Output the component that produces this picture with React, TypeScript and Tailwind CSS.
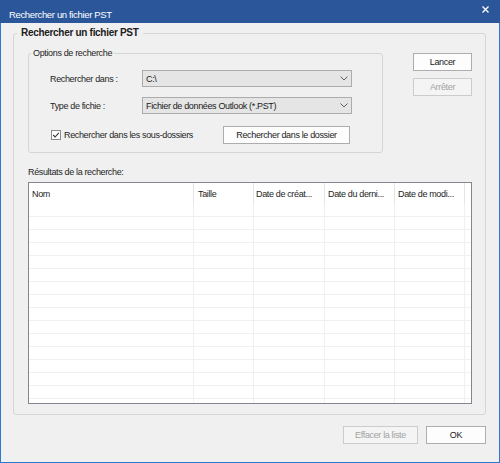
import React from 'react';

const columns = [
  { label: 'Nom', cls: 'w-[165px] pl-[3px]' },
  { label: 'Taille', cls: 'w-[60px] pl-[4px]' },
  { label: 'Date de créat...', cls: 'w-[71px] pl-[2px]' },
  { label: 'Date du derni...', cls: 'w-[70px] pl-[3px]' },
  { label: 'Date de modi...', cls: 'w-[70px] pl-[3px]' },
];

const Chevron = () => (
  <svg width="8" height="5" viewBox="0 0 8 5" className="shrink-0">
    <path d="M0.5 0.5 L4 4 L7.5 0.5" fill="none" stroke="#606060" strokeWidth="1" />
  </svg>
);

const Combo: React.FC<{ value: string }> = ({ value }) => (
  <div className="w-[210px] h-[17px] flex items-center justify-between pl-[3px] pr-[3px] bg-[#e5e5e5] border border-[#acacac]">
    <span className="text-[#1a1a1a]">{value}</span>
    <Chevron />
  </div>
);

const Button: React.FC<{ label: string; disabled?: boolean; className?: string }> = ({ label, disabled, className }) => (
  <div
    className={`h-[18px] flex items-center justify-center border ${
      disabled ? 'border-[#cccccc] bg-[#f4f4f4] text-[#a3a3a3]' : 'border-[#adadad] bg-[#fdfdfd] text-[#1a1a1a]'
    } ${className ?? ''}`}
  >
    {label}
  </div>
);

export default function App() {
  return (
    <div className="w-[500px] h-[463px] flex flex-col bg-[#f0f0f0] text-[9px] leading-[12px] tracking-[-0.35px] text-[#1e1e1e] font-['Liberation_Sans',Arial,sans-serif]">
      {/* Title bar */}
      <div className="h-[23px] shrink-0 bg-[#2b579a] flex items-start justify-between pl-[9px] pr-[11px]">
        <span className="mt-[9px] text-white text-[9.5px] leading-[12px]">Rechercher un fichier PST</span>
        <svg width="7" height="7" viewBox="0 0 7 7" className="mt-[6px]">
          <path d="M0.5 0.5 L6.5 6.5 M6.5 0.5 L0.5 6.5" stroke="#ffffff" strokeWidth="1.3" />
        </svg>
      </div>

      <div className="flex-1 flex flex-col border-x border-b border-[#2b79d0]">
        {/* Outer group */}
        <fieldset className="mt-[3px] ml-[12px] mr-[13px] pl-[3px] pb-[10px] border border-[#d5d5d5] rounded-[3px]">
          <legend className="px-[4px] text-[10px] leading-[14px] tracking-[-0.3px] font-bold text-[#202020]">Rechercher un fichier PST</legend>
          <div className="pl-[11px]">
            <div className="mt-[6px] flex items-start">
              {/* Options group */}
              <fieldset className="w-[355px] pl-[2px] pb-[8px] border border-[#d5d5d5] rounded-[3px]">
                <legend className="px-[2px] leading-[14px]">Options de recherche</legend>
                <div className="pl-[19px] pt-[10px]">
                  <div className="flex items-center">
                    <span className="w-[92px]">Rechercher dans :</span>
                    <Combo value="C:\" />
                  </div>
                  <div className="mt-[10px] flex items-center">
                    <span className="w-[92px]">Type de fichie :</span>
                    <Combo value="Fichier de données Outlook (*.PST)" />
                  </div>
                  <div className="mt-[12px] flex items-center">
                    <div className="w-[173px] flex items-center">
                      <svg width="10" height="10" viewBox="0 0 10 10" className="ml-[1px] mr-[3px] shrink-0">
                        <rect x="0.5" y="0.5" width="9" height="9" fill="#ffffff" stroke="#8a8a8a" />
                        <path d="M2.2 5 L4.1 7 L7.8 2.8" fill="none" stroke="#333333" strokeWidth="1.1" />
                      </svg>
                      <span>Rechercher dans les sous-dossiers</span>
                    </div>
                    <Button label="Rechercher dans le dossier" className="w-[127px]" />
                  </div>
                </div>
              </fieldset>

              {/* Side buttons */}
              <div className="ml-[30px] mt-[7px] flex flex-col gap-[7px]">
                <Button label="Lancer" className="w-[59px]" />
                <Button label="Arrêter" disabled className="w-[59px]" />
              </div>
            </div>

            <div className="mt-[13px]">Résultats de la recherche:</div>

            {/* Results list */}
            <div className="mt-[4px] w-[444px] h-[222px] bg-white border border-[#828790] overflow-hidden">
              <div className="h-[21px] flex">
                {columns.map((c) => (
                  <div key={c.label} className={`${c.cls} shrink-0 flex items-center border-r border-[#e5e5e5] whitespace-nowrap`}>
                    {c.label}
                  </div>
                ))}
              </div>
              {Array.from({ length: 16 }).map((_, i) => (
                <div key={i} className="h-[13px] flex border-b border-[#f0f0f0]">
                  {columns.map((c) => (
                    <div key={c.label} className={`${c.cls} shrink-0 border-r border-[#f0f0f0]`} />
                  ))}
                </div>
              ))}
            </div>
          </div>
        </fieldset>

        {/* Bottom buttons */}
        <div className="mt-[11px] mr-[13px] flex justify-end gap-[8px]">
          <Button label="Effacer la liste" disabled className="w-[75px]" />
          <Button label="OK" className="w-[60px]" />
        </div>
      </div>
    </div>
  );
}
